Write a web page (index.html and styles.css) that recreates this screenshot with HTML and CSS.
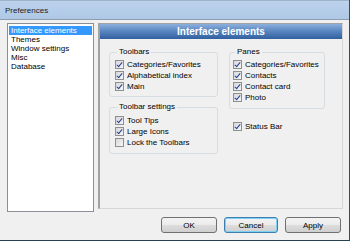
FILE: index.html
```html
<!DOCTYPE html>
<html lang="en">
<head>
    <meta charset="UTF-8">
    <title>Preferences</title>
    <link rel="stylesheet" href="styles.css">
</head>
<body>
    <div class="window">
        <div class="titlebar">Preferences</div>

        <div class="content">
            <ul class="nav-list">
                <li class="selected">Interface elements</li>
                <li>Themes</li>
                <li>Window settings</li>
                <li>Misc</li>
                <li>Database</li>
            </ul>

            <div class="panel">
                <div class="panel-header">Interface elements</div>
                <div class="panel-body">
                    <div class="column column-left">
                        <fieldset class="group group-toolbars">
                            <legend>Toolbars</legend>
                            <label class="check-row"><span class="check on"></span>Categories/Favorites</label>
                            <label class="check-row"><span class="check on"></span>Alphabetical index</label>
                            <label class="check-row"><span class="check on"></span>Main</label>
                        </fieldset>
                        <fieldset class="group group-settings">
                            <legend>Toolbar settings</legend>
                            <label class="check-row"><span class="check on"></span>Tool Tips</label>
                            <label class="check-row"><span class="check on"></span>Large Icons</label>
                            <label class="check-row"><span class="check"></span>Lock the Toolbars</label>
                        </fieldset>
                    </div>
                    <div class="column column-right">
                        <fieldset class="group group-panes">
                            <legend>Panes</legend>
                            <label class="check-row"><span class="check on"></span>Categories/Favorites</label>
                            <label class="check-row"><span class="check on"></span>Contacts</label>
                            <label class="check-row"><span class="check on"></span>Contact card</label>
                            <label class="check-row"><span class="check on"></span>Photo</label>
                        </fieldset>
                        <label class="check-row status-bar"><span class="check on"></span>Status Bar</label>
                    </div>
                </div>
            </div>
        </div>

        <div class="buttons">
            <button class="btn btn-ok">OK</button>
            <button class="btn btn-cancel">Cancel</button>
            <button class="btn btn-apply">Apply</button>
        </div>
    </div>
</body>
</html>
```

FILE: styles.css
```css
/* General */
* {
    box-sizing: border-box;
}

body {
    margin: 0;
    font-family: "Liberation Sans", Arial, sans-serif;
    font-size: 8px;
    color: #000;
    background-color: #f0f0f0;
}

.window {
    width: 350px;
    height: 241px;
    display: flex;
    flex-direction: column;
    background-color: #f0f0f0;
    border-right: 1px solid #3b4a56;
    border-bottom: 1px solid #24434f;
}

/* Title bar */
.titlebar {
    height: 20px;
    padding: 5px 0 0 5px;
    font-size: 8px;
    color: #1b1b1b;
    background: linear-gradient(#bcd3ed, #aec8e6);
    border-top: 1px solid #9fb3c8;
    border-bottom: 1px solid #8d9daf;
}

/* Main area */
.content {
    display: flex;
    gap: 4px;
    padding: 3px 0 0 7px;
    height: 189px;
}

.nav-list {
    list-style: none;
    margin: 0;
    width: 87px;
    height: 189px;
    padding: 2px 1px;
    background-color: #fff;
    border: 1px solid #8c9096;
}

.nav-list li {
    height: 9px;
    line-height: 9px;
    padding-left: 2px;
    white-space: nowrap;
}

.nav-list li.selected {
    background-color: #3399ff;
    color: #fff;
}

/* Right panel */
.panel {
    width: 245px;
    height: 186px;
    display: flex;
    flex-direction: column;
    border-left: 2px solid #a2a2a2;
    border-top: 1px solid #a2a2a2;
    border-right: 1px solid #d6d6d6;
    border-bottom: 1px solid #d6d6d6;
}

.panel-header {
    height: 15px;
    line-height: 15px;
    text-align: center;
    font-size: 10px;
    font-weight: bold;
    color: #fff;
    background: linear-gradient(#8db0dc, #5b88c2 45%, #315f9f);
}

.panel-body {
    display: flex;
    gap: 11px;
    padding: 8px 0 0 9px;
}

.column {
    display: flex;
    flex-direction: column;
}

.column-left { width: 109px; }
.column-right { width: 96px; }

/* Group boxes */
.group {
    margin: 0;
    padding: 2px 0 4px 5px;
    border: 1px solid #d5dde3;
    border-radius: 3px;
}

.group legend {
    padding: 0 2px;
    margin-left: 2px;
    line-height: 10px;
    font-size: 8px;
}

.group-settings {
    margin-top: 5px;
    padding-top: 3px;
    padding-bottom: 5px;
}

.group-panes {
    padding-left: 3px;
    padding-bottom: 5px;
}

/* Checkbox rows */
.check-row {
    display: flex;
    align-items: center;
    gap: 3px;
    height: 11px;
    white-space: nowrap;
}

.status-bar {
    margin-top: 12px;
    padding-left: 4px;
}

.check {
    width: 9px;
    height: 9px;
    flex: none;
    border: 1px solid #8f8f8f;
    background: linear-gradient(135deg, #d7d7d7, #f6f6f6);
    position: relative;
}

.check.on::after {
    content: "";
    position: absolute;
    left: 2px;
    top: 0px;
    width: 2px;
    height: 5px;
    border-right: 1.5px solid #21409a;
    border-bottom: 1.5px solid #21409a;
    transform: rotate(40deg);
}

/* Buttons */
.buttons {
    display: flex;
    justify-content: flex-end;
    gap: 7px;
    padding: 8px 8px 0 0;
}

.btn {
    width: 56px;
    height: 16px;
    padding: 0;
    font-family: "Liberation Sans", Arial, sans-serif;
    font-size: 8px;
    color: #000;
    border: 1px solid #707070;
    border-radius: 3px;
    background: linear-gradient(#f3f3f3 0%, #ebebeb 50%, #dddddd 51%, #cfcfcf 100%);
}

.btn-cancel {
    width: 54px;
    border-color: #3c7fb1;
    box-shadow: inset 0 0 0 1px #7fd0f3;
}
```
